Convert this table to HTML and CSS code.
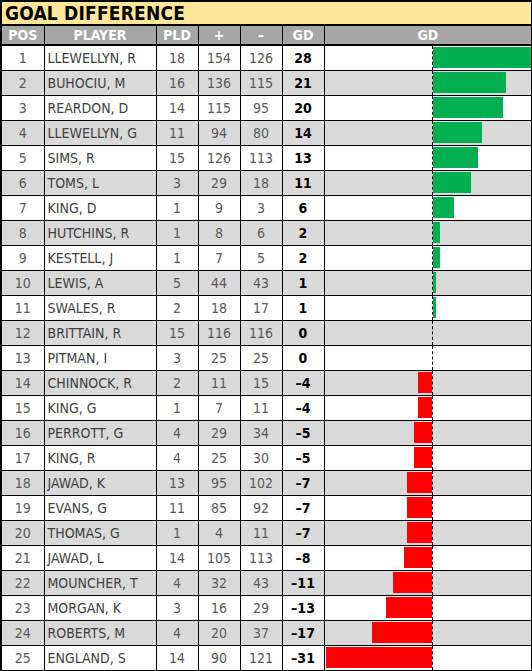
FILE: index.html
```html
<!DOCTYPE html>
<html lang="en">
<head>
    <meta charset="UTF-8">
    <title>Goal Difference</title>
    <link rel="stylesheet" href="styles.css">
</head>
<body>
    <table class="gd-table">
        <colgroup>
            <col class="c-pos">
            <col class="c-player">
            <col class="c-num">
            <col class="c-num">
            <col class="c-num">
            <col class="c-num">
            <col class="c-chart">
        </colgroup>
        <thead>
            <tr class="title-row">
                <th colspan="7">GOAL DIFFERENCE</th>
            </tr>
            <tr class="head-row">
                <th>POS</th>
                <th>PLAYER</th>
                <th>PLD</th>
                <th>+</th>
                <th>–</th>
                <th>GD</th>
                <th>GD</th>
            </tr>
        </thead>
        <tbody>
            <tr><td>1</td><td class="name">LLEWELLYN, R</td><td>18</td><td>154</td><td>126</td><td class="gd">28</td><td class="chart"><div class="bars"><div class="neg"></div><div class="pos"><div class="bar up" style="width: 98px"></div></div></div></td></tr>
            <tr><td>2</td><td class="name">BUHOCIU, M</td><td>16</td><td>136</td><td>115</td><td class="gd">21</td><td class="chart"><div class="bars"><div class="neg"></div><div class="pos"><div class="bar up" style="width: 73.5px"></div></div></div></td></tr>
            <tr><td>3</td><td class="name">REARDON, D</td><td>14</td><td>115</td><td>95</td><td class="gd">20</td><td class="chart"><div class="bars"><div class="neg"></div><div class="pos"><div class="bar up" style="width: 70px"></div></div></div></td></tr>
            <tr><td>4</td><td class="name">LLEWELLYN, G</td><td>11</td><td>94</td><td>80</td><td class="gd">14</td><td class="chart"><div class="bars"><div class="neg"></div><div class="pos"><div class="bar up" style="width: 49px"></div></div></div></td></tr>
            <tr><td>5</td><td class="name">SIMS, R</td><td>15</td><td>126</td><td>113</td><td class="gd">13</td><td class="chart"><div class="bars"><div class="neg"></div><div class="pos"><div class="bar up" style="width: 45.5px"></div></div></div></td></tr>
            <tr><td>6</td><td class="name">TOMS, L</td><td>3</td><td>29</td><td>18</td><td class="gd">11</td><td class="chart"><div class="bars"><div class="neg"></div><div class="pos"><div class="bar up" style="width: 38.5px"></div></div></div></td></tr>
            <tr><td>7</td><td class="name">KING, D</td><td>1</td><td>9</td><td>3</td><td class="gd">6</td><td class="chart"><div class="bars"><div class="neg"></div><div class="pos"><div class="bar up" style="width: 21px"></div></div></div></td></tr>
            <tr><td>8</td><td class="name">HUTCHINS, R</td><td>1</td><td>8</td><td>6</td><td class="gd">2</td><td class="chart"><div class="bars"><div class="neg"></div><div class="pos"><div class="bar up" style="width: 7px"></div></div></div></td></tr>
            <tr><td>9</td><td class="name">KESTELL, J</td><td>1</td><td>7</td><td>5</td><td class="gd">2</td><td class="chart"><div class="bars"><div class="neg"></div><div class="pos"><div class="bar up" style="width: 7px"></div></div></div></td></tr>
            <tr><td>10</td><td class="name">LEWIS, A</td><td>5</td><td>44</td><td>43</td><td class="gd">1</td><td class="chart"><div class="bars"><div class="neg"></div><div class="pos"><div class="bar up" style="width: 3.5px"></div></div></div></td></tr>
            <tr><td>11</td><td class="name">SWALES, R</td><td>2</td><td>18</td><td>17</td><td class="gd">1</td><td class="chart"><div class="bars"><div class="neg"></div><div class="pos"><div class="bar up" style="width: 3.5px"></div></div></div></td></tr>
            <tr><td>12</td><td class="name">BRITTAIN, R</td><td>15</td><td>116</td><td>116</td><td class="gd">0</td><td class="chart"><div class="bars"><div class="neg"></div><div class="pos"></div></div></td></tr>
            <tr><td>13</td><td class="name">PITMAN, I</td><td>3</td><td>25</td><td>25</td><td class="gd">0</td><td class="chart"><div class="bars"><div class="neg"></div><div class="pos"></div></div></td></tr>
            <tr><td>14</td><td class="name">CHINNOCK, R</td><td>2</td><td>11</td><td>15</td><td class="gd">–4</td><td class="chart"><div class="bars"><div class="neg"><div class="bar down" style="width: 14px"></div></div><div class="pos"></div></div></td></tr>
            <tr><td>15</td><td class="name">KING, G</td><td>1</td><td>7</td><td>11</td><td class="gd">–4</td><td class="chart"><div class="bars"><div class="neg"><div class="bar down" style="width: 14px"></div></div><div class="pos"></div></div></td></tr>
            <tr><td>16</td><td class="name">PERROTT, G</td><td>4</td><td>29</td><td>34</td><td class="gd">–5</td><td class="chart"><div class="bars"><div class="neg"><div class="bar down" style="width: 17.5px"></div></div><div class="pos"></div></div></td></tr>
            <tr><td>17</td><td class="name">KING, R</td><td>4</td><td>25</td><td>30</td><td class="gd">–5</td><td class="chart"><div class="bars"><div class="neg"><div class="bar down" style="width: 17.5px"></div></div><div class="pos"></div></div></td></tr>
            <tr><td>18</td><td class="name">JAWAD, K</td><td>13</td><td>95</td><td>102</td><td class="gd">–7</td><td class="chart"><div class="bars"><div class="neg"><div class="bar down" style="width: 24.5px"></div></div><div class="pos"></div></div></td></tr>
            <tr><td>19</td><td class="name">EVANS, G</td><td>11</td><td>85</td><td>92</td><td class="gd">–7</td><td class="chart"><div class="bars"><div class="neg"><div class="bar down" style="width: 24.5px"></div></div><div class="pos"></div></div></td></tr>
            <tr><td>20</td><td class="name">THOMAS, G</td><td>1</td><td>4</td><td>11</td><td class="gd">–7</td><td class="chart"><div class="bars"><div class="neg"><div class="bar down" style="width: 24.5px"></div></div><div class="pos"></div></div></td></tr>
            <tr><td>21</td><td class="name">JAWAD, L</td><td>14</td><td>105</td><td>113</td><td class="gd">–8</td><td class="chart"><div class="bars"><div class="neg"><div class="bar down" style="width: 28px"></div></div><div class="pos"></div></div></td></tr>
            <tr><td>22</td><td class="name">MOUNCHER, T</td><td>4</td><td>32</td><td>43</td><td class="gd">–11</td><td class="chart"><div class="bars"><div class="neg"><div class="bar down" style="width: 38.5px"></div></div><div class="pos"></div></div></td></tr>
            <tr><td>23</td><td class="name">MORGAN, K</td><td>3</td><td>16</td><td>29</td><td class="gd">–13</td><td class="chart"><div class="bars"><div class="neg"><div class="bar down" style="width: 45.5px"></div></div><div class="pos"></div></div></td></tr>
            <tr><td>24</td><td class="name">ROBERTS, M</td><td>4</td><td>20</td><td>37</td><td class="gd">–17</td><td class="chart"><div class="bars"><div class="neg"><div class="bar down" style="width: 59.5px"></div></div><div class="pos"></div></div></td></tr>
            <tr><td>25</td><td class="name">ENGLAND, S</td><td>14</td><td>90</td><td>121</td><td class="gd">–31</td><td class="chart"><div class="bars"><div class="neg"><div class="bar down" style="width: 106px"></div></div><div class="pos"></div></div></td></tr>
        </tbody>
    </table>
</body>
</html>
```

FILE: styles.css
```css
* {
    margin: 0;
    padding: 0;
    box-sizing: border-box;
}

body {
    background: white;
    font-family: 'Liberation Sans Narrow', 'DejaVu Sans Condensed', 'Liberation Sans', sans-serif;
    color: #595959;
}

.gd-table {
    width: 531px;
    border-collapse: collapse;
    table-layout: fixed;
    border: 2px solid #000;
}

.c-pos { width: 43px; }
.c-player { width: 112px; }
.c-num { width: 42px; }
.c-chart { width: 208px; }

.gd-table th,
.gd-table td {
    border: 1px solid #000;
    text-align: center;
    font-size: 14px;
    height: 25px;
    white-space: nowrap;
    overflow: hidden;
}

.title-row th {
    background: #ffe699;
    color: #000;
    text-align: left;
    font-size: 19px;
    font-weight: bold;
    height: 24px;
    padding: 0 3px;
    border-bottom: 2px solid #000;
    letter-spacing: 0.2px;
}

.head-row th {
    background: #a6a6a6;
    color: #fff;
    font-weight: bold;
    font-size: 14px;
    height: 20px;
    border-bottom: 2px solid #000;
}

.gd-table tbody tr:nth-child(even) td {
    background: #d9d9d9;
}

.gd-table td.name {
    text-align: left;
    padding-left: 3px;
    color: #404040;
}

.gd-table td.gd {
    color: #000;
    font-weight: bold;
}

.gd-table td.chart {
    padding: 0;
    vertical-align: top;
}

.bars {
    display: grid;
    grid-template-columns: 107px 1fr;
    height: 24px;
}

.neg {
    display: flex;
    justify-content: flex-end;
    align-items: flex-start;
}

.pos {
    display: flex;
    align-items: flex-start;
    border-left: 1px dashed #000;
}

.bar {
    height: 21px;
    margin-top: 1px;
}

.bar.up {
    background: #00b050;
}

.bar.down {
    background: #ff0000;
}
```
